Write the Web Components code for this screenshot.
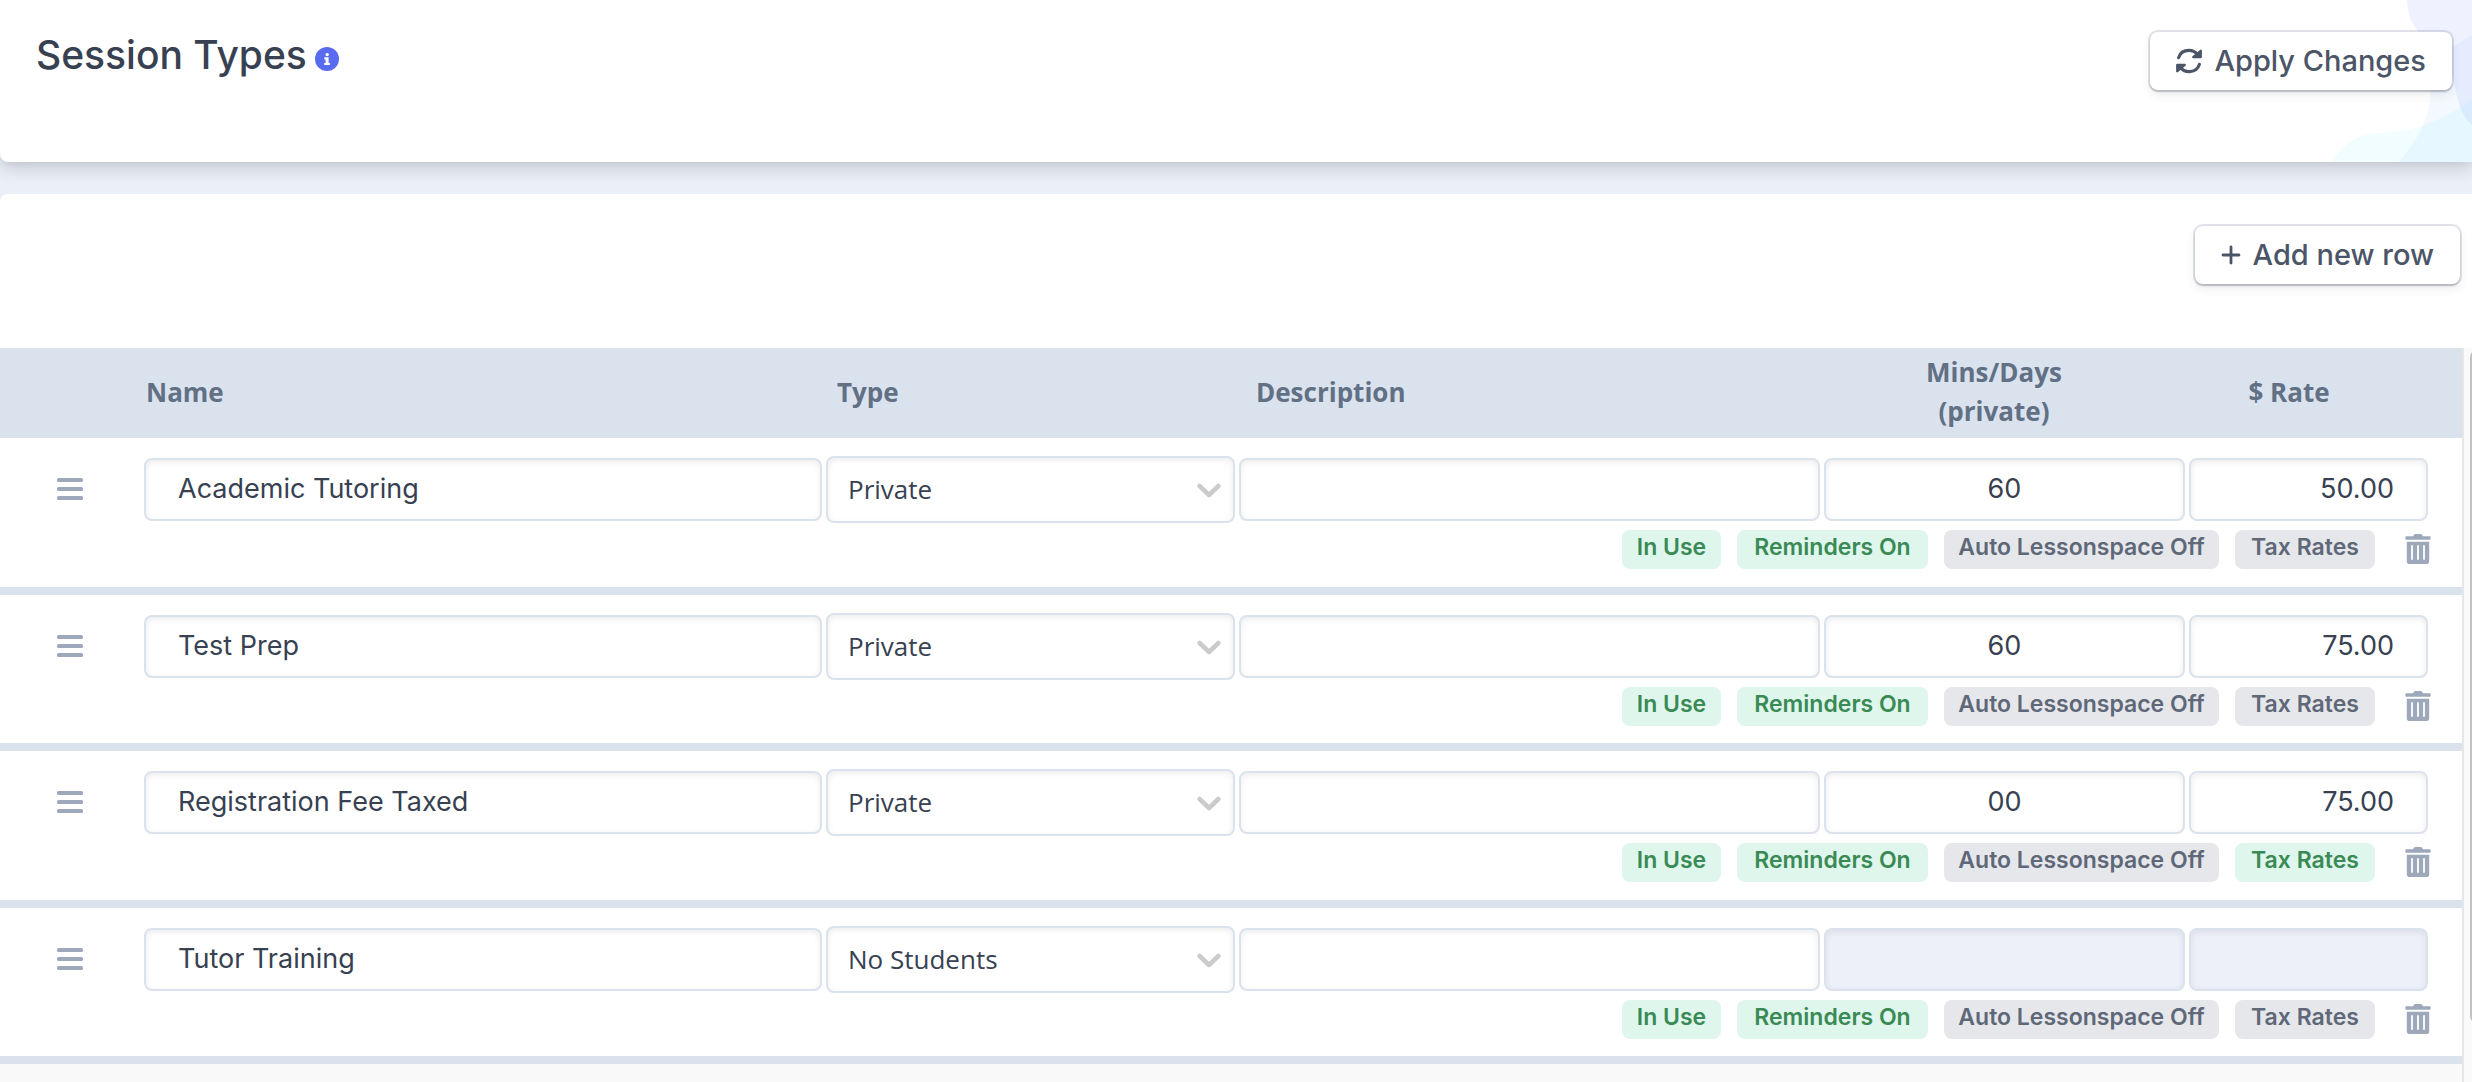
<!DOCTYPE html>
<html lang="en">
<head>
<meta charset="utf-8">
<meta name="viewport" content="width=device-width, initial-scale=1">
<title>Session Types</title>
<style>
  :root {
    --ink: #374151;
    --ink-soft: #4b5567;
    --ink-head: #617084;
    --line: #dae2ed;
    --icon: #9da9ba;
    --geo: Inter, "Open Sans", sans-serif;
    --human: "Open Sans", "Noto Sans", sans-serif;
  }
  html, body { margin: 0; height: 100%; }
  body { background: #ebeff8; color: var(--ink); font-family: var(--geo); overflow: hidden; }
</style>
</head>
<body>
<settings-page></settings-page>

<script>
const define = (name, html, setup) => {
  const template = document.createElement('template');
  template.innerHTML = '<style>*{box-sizing:border-box}</style>' + html;
  customElements.define(name, class extends HTMLElement {
    connectedCallback() {
      if (this.shadowRoot) return;
      this.attachShadow({ mode: 'open' }).append(template.content.cloneNode(true));
      if (setup) setup(this, this.shadowRoot);
    }
  });
};

define('action-button', `
  <style>
    :host { display: block; }
    button {
      display: flex; align-items: center; gap: 12px; height: 58px; margin: 2px; padding: 0 26px;
      border: 0; border-radius: 8px; background: #fff; color: var(--ink-soft);
      font: 500 29px/42px var(--geo); cursor: pointer; white-space: nowrap;
      box-shadow: 0 0 0 2px rgba(60,66,110,.15), 0 2px 2px rgba(0,0,0,.14), 0 5px 10px rgba(60,66,87,.1);
    }
  </style>
  <button type="button"><slot name="icon"></slot><span><slot></slot></span></button>
`);

define('info-dot', `
  <style>
    :host { display: block; }
    button { display: block; padding: 0; border: 0; background: none; }
    svg { display: block; }
  </style>
  <button type="button" aria-label="About session types">
    <svg width="24" height="24" viewBox="0 0 24 24">
      <circle cx="12" cy="12" r="12" fill="#596cf0"/>
      <circle cx="12.2" cy="7.6" r="1.7" fill="#fff"/>
      <path d="M9.4 10.2h4.2v5.7h1.3v2.2H9.2v-2.2h1.4v-3.5H9.4z" fill="#fff"/>
    </svg>
  </button>
`);

define('page-header', `
  <style>
    :host {
      display: flex; justify-content: space-between; align-items: flex-start; position: relative;
      height: 162px; padding: 30px 18px 0 36px; background: #fff; border-radius: 0 0 0 8px;
      box-shadow: 0 6px 18px rgba(0,0,0,.16), 0 2px 6px rgba(0,0,0,.04);
    }
    .title { display: flex; align-items: center; gap: 8px; }
    h1 { margin: 0; font: 500 39px/50px var(--geo); color: var(--ink); }
    info-dot { padding-top: 8px; }
    .art { position: absolute; right: 0; top: 0; }
    action-button { position: relative; }
  </style>
  <svg class="art" width="140" height="162" viewBox="0 0 140 162" aria-hidden="true">
    <path d="M75 0C75 14 80 24 87 33C98 48 116 52 121 78C125 96 127 114 140 125V0z" fill="#5f80fa" fill-opacity=".1"/>
    <path d="M140 35C118 47 100 64 99 90C98 122 84 140 67 162H140z" fill="#60b0ff" fill-opacity=".07"/>
    <path d="M0 162C12 142 26 134 48 133C84 131 108 122 140 99V162z" fill="#28d8ff" fill-opacity=".06"/>
  </svg>
  <div class="title"><h1>Session Types</h1><info-dot></info-dot></div>
  <action-button>
    <svg slot="icon" width="26" height="26" viewBox="0 0 26 26" fill="none" stroke="#4b5567" stroke-linecap="round" stroke-linejoin="round">
      <path d="M2.6 9.6C4 5 8.2 2.4 13 2.4c3.4 0 6.2 1.4 8.2 3.9" stroke-width="3.2"/>
      <path d="M24.7 2.8v6.3h-7.4z" fill="#4b5567" stroke-width="2.4"/>
      <path d="M23.4 16.4C22 21 17.8 23.6 13 23.6c-3.4 0-6.2-1.4-8.2-3.9" stroke-width="3.2"/>
      <path d="M1.3 23.2v-6.3h7.4z" fill="#4b5567" stroke-width="2.4"/>
    </svg>Apply Changes
  </action-button>
`);

define('drag-handle', `
  <style>
    :host { display: flex; }
    button { padding: 0; border: 0; background: none; cursor: grab; }
    svg { display: block; }
  </style>
  <button type="button" aria-label="Reorder row">
    <svg width="26" height="23" viewBox="0 0 26 23" fill="#9da9ba">
      <rect width="26" height="4" rx="1.5"/><rect y="9" width="26" height="4" rx="1.5"/><rect y="18" width="26" height="4" rx="1.5"/>
    </svg>
  </button>
`);

define('text-field', `
  <style>
    :host { display: block; }
    input {
      display: block; width: 100%; height: 63px; margin: 0; padding: 0 32px 2px;
      border: 2px solid var(--line); border-radius: 8px; background: #fff; color: var(--ink);
      font: 400 27px/39px var(--geo); text-align: inherit; outline: 0;
      box-shadow: inset 0 2px 6px rgba(0,0,0,.08);
    }
    input:disabled { background: #edf0f9; }
  </style>
  <input type="text">
`, (host, root) => {
  const input = root.querySelector('input');
  input.value = host.getAttribute('value') || '';
  input.disabled = host.hasAttribute('disabled');
  input.setAttribute('aria-label', host.getAttribute('label'));
});

define('type-select', `
  <style>
    :host { display: grid; }
    select, svg { grid-area: 1 / 1; }
    select {
      appearance: none; width: 100%; height: 67px; margin: 0; padding: 0 50px 0 20px;
      border: 2px solid var(--line); border-radius: 8px; background: #fff; color: var(--ink);
      font: 400 26px/39px var(--human); outline: 0;
      box-shadow: inset 0 2px 6px rgba(0,0,0,.08);
    }
    svg { place-self: center end; margin: 2px 14px 0 0; pointer-events: none; }
  </style>
  <select aria-label="Type"><option>Private</option><option>No Students</option></select>
  <svg width="24" height="15" viewBox="0 0 24 15" fill="none" stroke="#cbcbcb" stroke-width="4.5" stroke-linecap="round" stroke-linejoin="round">
    <path d="M2.6 3L12 12L21.4 3"/>
  </svg>
`, (host, root) => { root.querySelector('select').value = host.getAttribute('value'); });

define('status-badge', `
  <style>
    :host { display: block; }
    button {
      display: block; width: 100%; height: 39px; padding: 0 0 4px; border: 0; border-radius: 8px;
      background: #e6e7eb; color: #5f6878; font: 600 23px/35px var(--geo);
      text-align: center; white-space: nowrap; cursor: pointer;
    }
    :host([on]) button { background: #dff6ec; color: #3a8a55; }
  </style>
  <button type="button"><slot></slot></button>
`);

define('delete-button', `
  <style>
    :host { display: block; }
    button { display: block; padding: 4px 0 5px; border: 0; background: none; cursor: pointer; }
    svg { display: block; }
  </style>
  <button type="button" aria-label="Delete row">
    <svg width="26" height="30" viewBox="0 0 26 30" fill="#9da9ba">
      <path d="M1.2 2.2H8L9 .7Q9.4 0 10.2 0H15.8Q16.6 0 17 .7L18 2.2H24.8Q25.6 2.2 25.6 3V4.8Q25.6 5.7 24.8 5.700H1.2Q.4 5.700 .4 4.8V3Q.4 2.2 1.2 2.2z"/>
      <path fill-rule="evenodd" d="M1.8 7.8H24.2V27.2Q24.2 30 21.4 30H4.6Q1.8 30 1.8 27.2zM6.1 11.2V25.8H7.9V11.2zM12.1 11.2V25.8H13.9V11.2zM18.1 11.2V25.8H19.9V11.2z"/>
    </svg>
  </button>
`);

const sessions = [
  { name: 'Academic Tutoring', type: 'Private', mins: '60', rate: '50.00' },
  { name: 'Test Prep', type: 'Private', mins: '60', rate: '75.00' },
  { name: 'Registration Fee Taxed', type: 'Private', mins: '00', rate: '75.00', tax: true },
  { name: 'Tutor Training', type: 'No Students', locked: true }
];

define('session-table', `
  <style>
    :host { display: block; }
    table, thead, tbody { display: block; }
    tr { display: grid; align-items: center; }
    th, td { display: block; padding: 0; min-width: 0; }
    thead tr {
      grid-template-columns: 691fr 419fr 548fr 380fr 210fr;
      padding: 5px 68px 7px 146px; background: var(--line);
    }
    th { color: var(--ink-head); font: 700 26px/39px var(--human); text-align: left; }
    th.mid { text-align: center; }
    tbody tr {
      grid-template-columns: 140px 678fr 409fr 581fr 361fr 239fr; gap: 7px 4px;
      padding: 18px 34px 18px 0; background: #fff; border-bottom: 8px solid var(--line);
    }
    tbody tr:nth-child(even) { padding-bottom: 17px; }
    .grip { padding-left: 57px; }
    .mins { text-align: center; }
    .rate { text-align: right; }
    .tools {
      grid-column: 1 / -1; display: grid; justify-content: end; align-items: center;
      grid-template-columns: 99px 191px 275px 140px 40px; gap: 16px; margin-right: -3px;
    }
    delete-button { justify-self: end; }
  </style>
  <table>
    <thead><tr>
      <th>Name</th><th>Type</th><th>Description</th>
      <th class="mid">Mins/Days<br>(private)</th><th class="mid">$ Rate</th>
    </tr></thead>
    <tbody></tbody>
  </table>
`, (host, root) => {
  root.querySelector('tbody').innerHTML = sessions.map(s => {
    const lock = s.locked ? 'disabled' : '';
    return `<tr>
      <td class="grip"><drag-handle></drag-handle></td>
      <td><text-field label="Name" value="${s.name}"></text-field></td>
      <td><type-select value="${s.type}"></type-select></td>
      <td><text-field label="Description"></text-field></td>
      <td class="mins"><text-field label="Minutes or days" value="${s.mins || ''}" ${lock}></text-field></td>
      <td class="rate"><text-field label="Rate" value="${s.rate || ''}" ${lock}></text-field></td>
      <td class="tools">
        <status-badge on>In Use</status-badge>
        <status-badge on>Reminders On</status-badge>
        <status-badge>Auto Lessonspace Off</status-badge>
        <status-badge ${s.tax ? 'on' : ''}>Tax Rates</status-badge>
        <delete-button></delete-button>
      </td>
    </tr>`;
  }).join('');
});

define('scroll-panel', `
  <style>
    :host { display: flex; min-height: 0; background: #f9f9f9; }
    .view { flex: 1; min-width: 0; }
    .track { flex: 0 0 10px; overflow: hidden; border-left: 2px solid #e7e7e7; background: #fafafa; padding: 2px 0 0 6px; }
    .thumb { width: 14px; height: 92%; border-radius: 7px; background: #c2c2c2; }
  </style>
  <div class="view"><slot></slot></div>
  <div class="track"><div class="thumb"></div></div>
`);

define('settings-page', `
  <style>
    :host { display: flex; flex-direction: column; gap: 32px; height: 100vh; }
    page-header { flex: none; }
    main { flex: 1; min-height: 0; display: flex; flex-direction: column; position: relative; background: #fff; border-radius: 8px 0 0 0; overflow: hidden; }
    .bar { display: flex; justify-content: flex-end; padding: 30px 10px 62px; }
    scroll-panel { flex: 1; }
  </style>
  <page-header></page-header>
  <main>
    <div class="bar">
      <action-button>
        <svg slot="icon" width="20" height="20" viewBox="0 0 20 20" fill="none" stroke="#4b5567" stroke-width="2.8" stroke-linecap="round">
          <path d="M10 2V18M2 10H18"/>
        </svg>Add new row
      </action-button>
    </div>
    <scroll-panel><session-table></session-table></scroll-panel>
  </main>
`);
</script>
</body>
</html>
